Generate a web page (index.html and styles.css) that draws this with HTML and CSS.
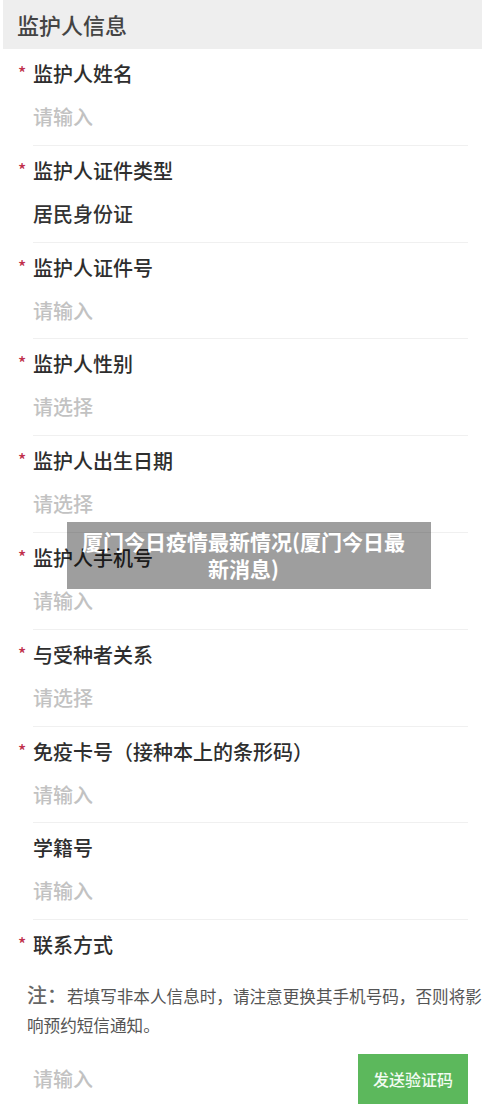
FILE: index.html
```html
<!DOCTYPE html>
<html lang="zh-CN">
<head>
  <meta charset="UTF-8">
  <meta name="viewport" content="width=device-width, initial-scale=1.0">
  <title>监护人信息</title>
  <link rel="stylesheet" href="styles.css">
</head>
<body>
  <div class="page">
    <div class="section-title">监护人信息</div>

    <div class="field">
      <div class="label required">监护人姓名</div>
      <div class="value placeholder">请输入</div>
    </div>
    <div class="field">
      <div class="label required">监护人证件类型</div>
      <div class="value">居民身份证</div>
    </div>
    <div class="field">
      <div class="label required">监护人证件号</div>
      <div class="value placeholder">请输入</div>
    </div>
    <div class="field">
      <div class="label required">监护人性别</div>
      <div class="value placeholder">请选择</div>
    </div>
    <div class="field">
      <div class="label required">监护人出生日期</div>
      <div class="value placeholder">请选择</div>
    </div>
    <div class="field">
      <div class="label required">监护人手机号</div>
      <div class="value placeholder">请输入</div>
    </div>
    <div class="field">
      <div class="label required">与受种者关系</div>
      <div class="value placeholder">请选择</div>
    </div>
    <div class="field">
      <div class="label required">免疫卡号（接种本上的条形码）</div>
      <div class="value placeholder">请输入</div>
    </div>
    <div class="field">
      <div class="label">学籍号</div>
      <div class="value placeholder">请输入</div>
    </div>

    <div class="field field-last">
      <div class="label required">联系方式</div>
      <p class="note"><span class="note-head">注：</span>若填写非本人信息时，请注意更换其手机号码，否则将影响预约短信通知。</p>
      <div class="code-row">
        <span class="placeholder">请输入</span>
        <button type="button" class="code-button">发送验证码</button>
      </div>
    </div>

    <div class="caption">厦门今日疫情最新情况(厦门今日最新消息)</div>
  </div>
</body>
</html>
```

FILE: styles.css
```css
body {
  margin: 0;
  padding: 0;
  background: #ffffff;
  font-family: "Noto Sans CJK SC", "Noto Sans", sans-serif;
  color: #333333;
}

.page {
  position: relative;
  width: 500px;
  min-height: 1113px;
  overflow: hidden;
}

.section-title {
  margin: 0 18px 0 3px;
  height: 49px;
  padding-left: 14px;
  background: #eeeeee;
  font-size: 22px;
  font-weight: 500;
  line-height: 49px;
  color: #444444;
}

.field {
  margin-left: 33px;
  width: 435px;
  padding: 10px 0 12.8px;
  border-bottom: 1px solid #f0f0f0;
}

.label {
  font-size: 20px;
  font-weight: 500;
  line-height: 30px;
  color: #2e2e2e;
}

.label.required::before {
  content: "*";
  display: inline-block;
  width: 15px;
  margin-left: -15px;
  color: #c0304a;
  font-size: 17px;
  vertical-align: top;
  line-height: 28px;
}

.value {
  margin-top: 13px;
  font-size: 20px;
  font-weight: 500;
  line-height: 30px;
}

.placeholder {
  color: #c2c2c2;
}

.field-last {
  border-bottom: none;
}

.note {
  margin: 20px 0 0 -6px;
  width: 462px;
  font-size: 16.6px;
  line-height: 29px;
  color: #555555;
}

.note-head {
  font-size: 20px;
  font-weight: 500;
  color: #666666;
}

.code-row {
  margin-top: 13.5px;
  display: flex;
  justify-content: space-between;
  align-items: center;
  font-size: 20px;
  font-weight: 500;
}

.code-button {
  width: 110px;
  height: 50px;
  border: none;
  border-radius: 0;
  background: #5cb85c;
  color: #f2fbf2;
  font-family: inherit;
  font-size: 16px;
  font-weight: 500;
  padding: 0;
}

.caption {
  position: absolute;
  left: 67px;
  top: 522px;
  width: 333px;
  height: 55px;
  padding: 6px 21px 6px 10px;
  background: rgba(0, 0, 0, 0.38);
  color: #ffffff;
  font-size: 21px;
  font-weight: bold;
  line-height: 27px;
  text-align: center;
}
```
